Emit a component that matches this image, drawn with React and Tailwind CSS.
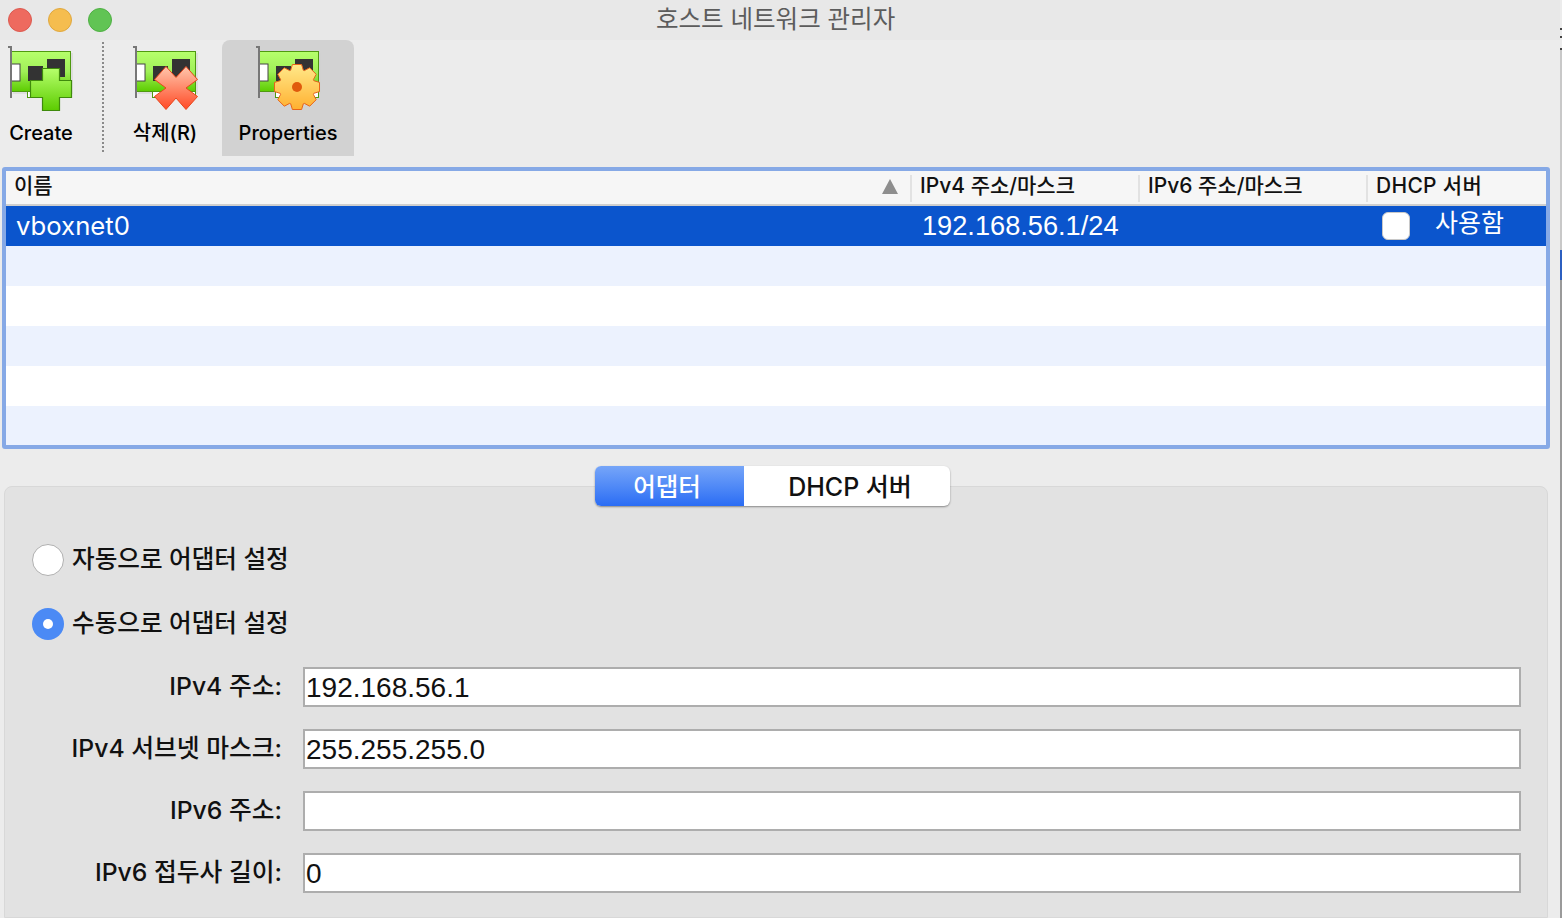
const FONT = "font-['Inter','Noto_Sans_CJK_KR',sans-serif]";
const NUM = "font-['Liberation_Sans','Noto_Sans_CJK_KR',sans-serif]";

function Nic({ id, children }) {
  return (
    <svg width="66" height="66" viewBox="0 0 66 66" className="block">
      <defs>
        <linearGradient id={`card-${id}`} x1="0" y1="0" x2="0" y2="1">
          <stop offset="0" stopColor="#b6ff6c" />
          <stop offset="0.5" stopColor="#a0f058" />
          <stop offset="1" stopColor="#5ccc00" />
        </linearGradient>
      </defs>
      <rect x="5" y="7" width="60" height="41" fill="#cfcfcf" opacity="0.5" />
      <rect x="3.5" y="5.5" width="59" height="40" fill={`url(#card-${id})`} stroke="#4f9a10" />
      <rect x="19.5" y="45.5" width="43" height="6" fill="#fff" stroke="#4f9a10" />
      <rect x="3" y="18" width="9" height="17" fill="#fff" stroke="#444" />
      <rect x="20" y="20" width="15" height="15" fill="#333" />
      <rect x="39" y="13" width="18" height="18" fill="#333" />
      <path d="M0 1h3v51" fill="none" stroke="#777" strokeWidth="2" />
      {children}
    </svg>
  );
}

function PlusIcon() {
  return (
    <Nic id="p">
      <defs>
        <linearGradient id="plus" x1="0" y1="0" x2="0" y2="1">
          <stop offset="0" stopColor="#b6ff6c" />
          <stop offset="1" stopColor="#5ccc00" />
        </linearGradient>
      </defs>
      <path d="M34.5 22.5h17v12h12v17h-12v13h-17v-13h-12v-17h12z" fill="url(#plus)" stroke="#3f8a0c" strokeWidth="1.2" />
    </Nic>
  );
}

function CrossIcon() {
  return (
    <Nic id="x">
      <defs>
        <linearGradient id="cross" x1="0" y1="0" x2="0" y2="1">
          <stop offset="0" stopColor="#ffc7ad" />
          <stop offset="1" stopColor="#ff4a26" />
        </linearGradient>
      </defs>
      <path d="M43 31.5L53 20.5 64.5 33.5 53 42 64.5 50.5 53 63.5 43 52 33 63.5 21.5 50.5 33 42 21.5 33.5 33 20.5z" fill="url(#cross)" stroke="#e8451a" strokeWidth="1" strokeLinejoin="round" />
    </Nic>
  );
}

function GearIcon() {
  const teeth = [];
  const cx = 41, cy = 41, n = 8;
  for (let i = 0; i < n; i++) {
    const a = (i / n) * Math.PI * 2 - Math.PI / 2;
    const p = (r, d) => `${(cx + r * Math.cos(a + d)).toFixed(1)} ${(cy + r * Math.sin(a + d)).toFixed(1)}`;
    teeth.push(p(18, -0.36), p(23, -0.2), p(23, 0.2), p(18, 0.36));
  }
  return (
    <Nic id="g">
      <defs>
        <linearGradient id="gear" x1="0" y1="0" x2="0" y2="1">
          <stop offset="0" stopColor="#ffe98a" />
          <stop offset="1" stopColor="#ffb030" />
        </linearGradient>
      </defs>
      <polygon points={teeth.join(" ")} fill="url(#gear)" stroke="#e8641a" strokeWidth="1" strokeLinejoin="round" />
      <circle cx={cx} cy={cy} r="5" fill="#e05a0c" />
    </Nic>
  );
}

function ToolButton({ icon, label, width, active, offset }) {
  return (
    <div className={`flex flex-col items-center ${width} h-[116px] rounded-t-lg ${active ? "bg-[#d2d2d2]" : ""}`}>
      <div className={`mt-[6px] ${offset}`}>{icon}</div>
      <div className="mt-[7px] text-[20px] font-medium leading-[28px] text-black">{label}</div>
    </div>
  );
}

function Row({ striped, children }) {
  return <div className={`h-10 shrink-0 ${striped ? "bg-[#ecf2fe]" : "bg-white"}`}>{children}</div>;
}

function Radio({ checked, label, className }) {
  return (
    <label className={`flex items-center h-8 ${className}`}>
      <span className={`flex items-center justify-center w-8 h-8 rounded-full ${checked ? "bg-[#4b8af5]" : "bg-white border border-[#b0b0b0]"}`}>
        {checked && <span className="w-[10px] h-[10px] rounded-full bg-white" />}
      </span>
      <span className="ml-2 text-[24.6px] font-medium leading-8 -mt-[3px] text-[#111]">{label}</span>
    </label>
  );
}

function Field({ label, value }) {
  return (
    <div className="flex items-center h-10 mb-[22px]">
      <div className="w-[250px] text-right text-[24.75px] font-medium text-[#111] shrink-0">{label}</div>
      <input
        readOnly
        value={value}
        className={`ml-[21px] w-[1218px] h-10 pl-[1px] pr-[1px] pt-[2px] bg-white border-2 border-[#adadad] outline-none text-[28px] text-[#111] ${NUM}`}
      />
    </div>
  );
}

export default function App() {
  return (
    <div className={`flex w-[1562px] h-[918px] overflow-hidden bg-[#ececec] ${FONT}`}>
      <div className="flex flex-col w-[1560px] h-full rounded-tr-lg">
        <div className="flex items-center h-10 pl-2 shrink-0 bg-[#e8e8e8]">
          <span className="w-6 h-6 rounded-full bg-[#ee6a5f] border border-[#dc5a50]" />
          <span className="w-6 h-6 ml-4 rounded-full bg-[#f5bd4f] border border-[#e0a83f]" />
          <span className="w-6 h-6 ml-4 rounded-full bg-[#61c454] border border-[#4fb044]" />
          <span className="ml-[544px] text-[24.5px] leading-10 text-[#5c5c5c] -mt-[3px]">호스트 네트워크 관리자</span>
        </div>

        <div className="flex h-[127px] shrink-0 items-start">
          <ToolButton icon={<PlusIcon />} label="Create" width="w-[82px]" offset="" />
          <div className="ml-[20px] mt-[2px] h-[110px] border-l-2 border-dotted border-[#8a8a8a]" />
          <div className="ml-[19px]">
            <ToolButton icon={<CrossIcon />} label="삭제(R)" width="w-[84px]" offset="ml-[2px]" />
          </div>
          <div className="ml-[15px]">
            <ToolButton icon={<GearIcon />} label="Properties" width="w-[132px]" active offset="ml-[2px]" />
          </div>
        </div>

        <div className="mx-[2px] h-[282px] w-[1548px] shrink-0 border-4 border-[#86a9e6] rounded-[3px] overflow-hidden bg-white flex flex-col">
          <div className="grid grid-cols-[904px_228px_228px_180px] h-[35px] shrink-0 border-b-2 border-[#cfcfcf] bg-[#f6f6f6] text-[21px] font-medium text-[#111]">
            <div className="flex items-center justify-between pl-2 pr-[11px]">
              <span className="-mt-[5px]">이름</span>
              <svg width="18" height="16" viewBox="0 0 18 16" className="-mt-[5px]"><path d="M9 1l8 15H1z" fill="#8e8e8e" /></svg>
            </div>
            <div className="flex items-center pl-2 border-l-2 border-[#e2e2e2] my-[4px]"><span className="-mt-[5px]">IPv4 주소/마스크</span></div>
            <div className="flex items-center pl-2 border-l-2 border-[#e2e2e2] my-[4px]"><span className="-mt-[5px]">IPv6 주소/마스크</span></div>
            <div className="flex items-center pl-2 border-l-2 border-[#e2e2e2] my-[4px]"><span className="-mt-[5px] tracking-[0.3px]">DHCP 서버</span></div>
          </div>
          <div className="grid grid-cols-[905px_456px_179px] h-10 shrink-0 items-center bg-[#0b55cd] text-white text-[25.7px]">
            <div className="pl-[10px]">vboxnet0</div>
            <div className={`pl-[11px] text-[27.2px] ${NUM}`}>192.168.56.1/24</div>
            <div className="flex items-center pl-[15px]">
              <span className="w-7 h-7 rounded-md bg-white border border-[#c8c8c8]" />
              <span className="ml-[25px] -mt-[5px] text-[25px]">사용함</span>
            </div>
          </div>
          <Row striped />
          <Row />
          <Row striped />
          <Row />
          <Row striped />
        </div>

        <div className="flex-1 mt-[37px] mx-1 w-[1544px] rounded-t-lg border border-[#d8d8d8] bg-[#e2e2e2] pl-[27px]">
          <div className="flex w-[355px] h-10 -mt-[21px] ml-[563px] rounded-md bg-white shadow-[0_1px_2px_rgba(0,0,0,0.4)] font-medium">
            <div className="flex items-center justify-center w-[149px] rounded-l-md text-white text-[24.5px] pr-[5px] pt-[2px] bg-gradient-to-b from-[#76a5f8] to-[#2a6cf4]">
              <span>어댑터</span>
            </div>
            <div className="flex items-center justify-center flex-1 pl-[6px] pt-[3px] text-[25px] text-[#111]">DHCP 서버</div>
          </div>
          <Radio label="자동으로 어댑터 설정" className="mt-[38px]" />
          <Radio checked label="수동으로 어댑터 설정" className="mt-[32px]" />
          <div className="mt-[27px]">
            <Field label="IPv4 주소:" value="192.168.56.1" />
            <Field label="IPv4 서브넷 마스크:" value="255.255.255.0" />
            <Field label="IPv6 주소:" value="" />
            <Field label="IPv6 접두사 길이:" value="0" />
          </div>
        </div>
      </div>
      <div className="flex flex-col w-[2px] h-full bg-[#9a9a9a]">
        <div className="h-[28px] bg-[#ececec]" />
        <div className="h-[2px] bg-[#444]" />
        <div className="h-[6px] bg-[#ececec]" />
        <div className="h-[2px] bg-[#444]" />
        <div className="h-[10px] bg-[#ececec]" />
        <div className="h-[2px] bg-[#444]" />
        <div className="h-[200px] bg-[#c8c8c8]" />
        <div className="h-[30px] bg-[#2c5fc0]" />
      </div>
    </div>
  );
}
